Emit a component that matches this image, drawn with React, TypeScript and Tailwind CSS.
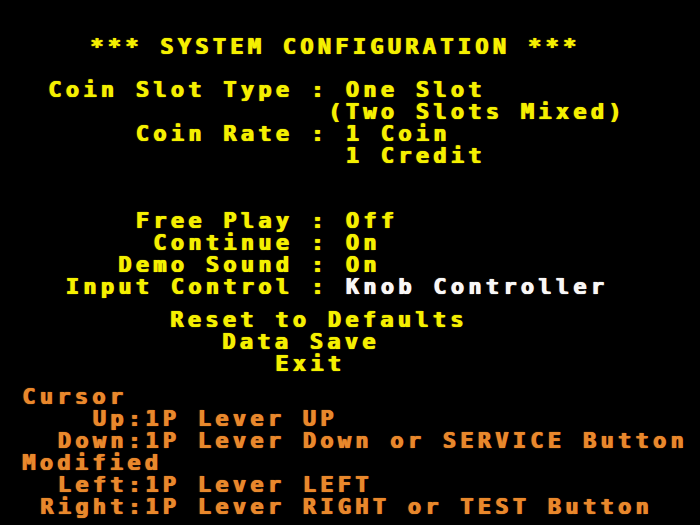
import { Fragment } from 'react'

const settings = [
  { label: 'Coin Slot Type :', value: 'One Slot' },
  { label: '', value: '(Two Slots Mixed)', shift: true },
  { label: 'Coin Rate :', value: '1 Coin' },
  { label: '', value: '1 Credit' },
]

const switches = [
  { label: 'Free Play :', value: 'Off' },
  { label: 'Continue :', value: 'On' },
  { label: 'Demo Sound :', value: 'On' },
  { label: 'Input Control :', value: 'Knob Controller', active: true },
]

const cursorKeys = [
  { key: 'Up:', action: '1P Lever UP' },
  { key: 'Down:', action: '1P Lever Down or SERVICE Button' },
]

const modifyKeys = [
  { key: 'Left:', action: '1P Lever LEFT' },
  { key: 'Right:', action: '1P Lever RIGHT or TEST Button' },
]

const Row = ({ label, value, active, shift }: { label: string; value: string; active?: boolean; shift?: boolean }) => (
  <>
    <div className="text-right">{label}</div>
    <div className={`${shift ? 'pl-0' : 'pl-[17.5px]'} ${active ? 'text-[#f8f8f8]' : ''}`}>{value}</div>
  </>
)

const KeyList = ({ items }: { items: { key: string; action: string }[] }) => (
  <div className="grid grid-cols-[145px_auto]">
    {items.map((k) => (
      <Fragment key={k.key}>
        <div className="text-right">{k.key}</div>
        <div>{k.action}</div>
      </Fragment>
    ))}
  </div>
)

export default function App() {
  return (
    <div className="w-[700px] h-[525px] bg-black overflow-hidden pt-[36px] text-[#f4f000] font-bold text-[22px] leading-[22px] tracking-[4.26px] whitespace-pre [font-family:'DejaVu_Sans_Mono',monospace] [text-shadow:1px_0_0_currentColor,0_0_1px_currentColor]">
      <div className="pl-[90px]">*** SYSTEM CONFIGURATION ***</div>

      <div className="mt-[21px] grid grid-cols-[328px_auto]">
        {settings.map((s, i) => (
          <Row key={i} {...s} />
        ))}
      </div>

      <div className="mt-[43px] grid grid-cols-[328px_auto]">
        {switches.map((s, i) => (
          <Row key={i} {...s} />
        ))}
      </div>

      <div className="mt-[11px] flex flex-col">
        <div className="pl-[170px]">Reset to Defaults</div>
        <div className="pl-[222px]">Data Save</div>
        <div className="pl-[275px]">Exit</div>
      </div>

      <div className="mt-[11px] text-[#e8882c]">
        <div className="pl-[22px]">Cursor</div>
        <KeyList items={cursorKeys} />
        <div className="pl-[22px]">Modified</div>
        <KeyList items={modifyKeys} />
      </div>
    </div>
  )
}
